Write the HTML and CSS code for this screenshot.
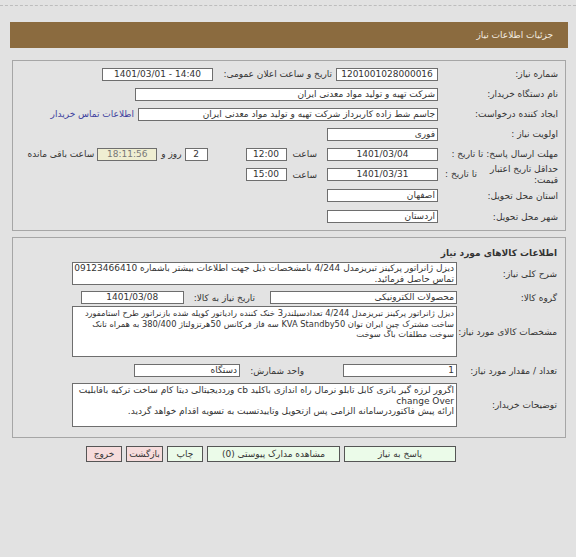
FILE: index.html
```html
<!DOCTYPE html>
<html lang="fa" dir="rtl">
<head>
<meta charset="utf-8">
<title>جزئیات اطلاعات نیاز</title>
<link rel="stylesheet" href="styles.css">
</head>
<body>
<div class="topline"></div>
<div class="header"><span>جزئیات اطلاعات نیاز</span></div>

<div class="panel p1">
  <div class="row">
    <div class="lbl">شماره نیاز:</div>
    <div class="vals">
      <span class="box c w102">1201001028000016</span>
      <span class="txt t-pub">تاریخ و ساعت اعلان عمومی:</span>
      <span class="box c w111 ltrbox">1401/03/01 - 14:40</span>
    </div>
  </div>
  <div class="row">
    <div class="lbl">نام دستگاه خریدار:</div>
    <div class="vals"><span class="box w303">شرکت تهیه و تولید مواد معدنی ایران</span></div>
  </div>
  <div class="row">
    <div class="lbl">ایجاد کننده درخواست:</div>
    <div class="vals">
      <span class="box w300">جاسم شط زاده کاربرداز شرکت تهیه و تولید مواد معدنی ایران</span>
      <span class="link">اطلاعات تماس خریدار</span>
    </div>
  </div>
  <div class="row">
    <div class="lbl">اولویت نیاز :</div>
    <div class="vals"><span class="box w111">فوری</span></div>
  </div>
  <div class="row">
    <div class="lbl">مهلت ارسال پاسخ: تا تاریخ :</div>
    <div class="vals">
      <span class="box c w111">1401/03/04</span>
      <span class="txt t-saat">ساعت</span>
      <span class="box c w41">12:00</span>
      <span class="box c w23 ml-day">2</span>
      <span class="txt t-rooz">روز و</span>
      <span class="box c w60 remain">18:11:56</span>
      <span class="txt t-remain">ساعت باقی مانده</span>
    </div>
  </div>
  <div class="row r2">
    <div class="lbl two">
      <span class="two-main">حداقل تاریخ اعتبار<br>قیمت:</span>
      <span class="two-side">تا تاریخ :</span>
    </div>
    <div class="vals">
      <span class="box c w111">1401/03/31</span>
      <span class="txt t-saat">ساعت</span>
      <span class="box c w41">15:00</span>
    </div>
  </div>
  <div class="row r2">
    <div class="lbl">استان محل تحویل:</div>
    <div class="vals"><span class="box w111">اصفهان</span></div>
  </div>
  <div class="row r2">
    <div class="lbl">شهر محل تحویل:</div>
    <div class="vals"><span class="box w111">اردستان</span></div>
  </div>
</div>

<div class="panel p2">
  <div class="ptitle">اطلاعات کالاهای مورد نیاز</div>
  <div class="row2 g-desc">
    <div class="lbl2">شرح کلی نیاز:</div>
    <div class="area a-desc">دیزل ژانراتور پرکینز تبریزمدل 4/244 بامشخصات ذیل جهت اطلاعات بیشتر باشماره 09123466410<br>تماس حاصل فرمائید.</div>
  </div>
  <div class="row2 g-group">
    <div class="lbl2">گروه کالا:</div>
    <span class="box w187">محصولات الکترونیکی</span>
    <span class="txt t-need">تاریخ نیاز به کالا:</span>
    <span class="box c w103">1401/03/08</span>
  </div>
  <div class="row2 g-spec">
    <div class="lbl2">مشخصات کالای مورد نیاز:</div>
    <div class="area a-spec">دیزل ژانراتور پرکینز تبریزمدل 4/244 تعدادسیلندر3 خنک کننده رادیاتور کوپله شده بازنراتور طرح استامفورد<br>ساخت مشترک چین ایران توان KVA Standby50 سه فاز فرکانس 50هرتزولتاژ 380/400 به همراه تانک<br>سوخت مطلقات باگ سوخت</div>
  </div>
  <div class="row2 g-qty">
    <div class="lbl2">تعداد / مقدار مورد نیاز:</div>
    <span class="box w114">1</span>
    <span class="txt t-unit">واحد شمارش:</span>
    <span class="box w106">دستگاه</span>
  </div>
  <div class="row2 g-note">
    <div class="lbl2">توضیحات خریدار:</div>
    <div class="area a-note">اگرور لرزه گیر باتری کابل تابلو نرمال راه اندازی باکلید cb ورددیجیتالی دیتا کام ساخت ترکیه باقابلیت<br><span class="ltr">change Over</span><br>ارائه پیش فاکتوردرسامانه الزامی پس ازتحویل وتاییدتسبت به تسویه اقدام خواهد گردید.</div>
  </div>
</div>

<div class="buttons">
  <span class="btn green b-reply">پاسخ به نیاز</span>
  <span class="btn green b-docs">مشاهده مدارک پیوستی (0)</span>
  <span class="btn green b-print">چاپ</span>
  <span class="btn pink b-back">بازگشت</span>
  <span class="btn pink b-exit">خروج</span>
</div>
</body>
</html>
```

FILE: styles.css
```css
html, body {
  margin: 0;
  padding: 0;
}
body {
  width: 576px;
  height: 557px;
  background: #e2e2e2;
  font-family: "DejaVu Sans", sans-serif;
  font-size: 9px;
  color: #333;
  overflow: hidden;
}
.topline {
  margin-top: 5px;
  border-top: 1px dashed #bdbdbd;
}
.header {
  margin: 16px 8px 0 10px;
  height: 26px;
  background: #8b6b3f;
  color: #f3ece0;
  display: flex;
  align-items: center;
  padding-right: 15px;
  font-size: 9px;
}
.panel {
  border: 1px solid #a6a6a6;
  background: #e3e3e3;
}
.p1 {
  margin: 12px 10px 0 12px;
  padding: 3px 7px 3px 0;
  height: 163px;
}
.row {
  display: flex;
  align-items: center;
  height: 20px;
}
.row.r2 { height: 21px; }
.lbl {
  width: 113px;
  flex: none;
  margin-left: 7px;
  white-space: nowrap;
}
.lbl.two {
  display: flex;
  align-items: center;
  justify-content: space-between;
  line-height: 11px;
}
.vals {
  display: flex;
  align-items: center;
}
.box {
  display: inline-block;
  box-sizing: border-box;
  height: 13px;
  line-height: 11px;
  background: #fff;
  border: 1px solid #6e6e6e;
  padding: 0 2px;
  white-space: nowrap;
  overflow: hidden;
  flex: none;
}
.box.c { text-align: center; }
.ltrbox { direction: ltr; }
.w102 { width: 102px; }
.w111 { width: 111px; }
.w303 { width: 303px; }
.w300 { width: 300px; }
.w41 { width: 41px; }
.w23 { width: 23px; }
.w60 { width: 60px; }
.w187 { width: 187px; }
.w103 { width: 103px; }
.w114 { width: 114px; }
.w106 { width: 106px; }
.txt { white-space: nowrap; flex: none; }
.t-pub { width: 119px; margin: 0 4px 0 0; text-align: right; }
.t-saat { margin: 0 10px 0 6px; }
.ml-day { margin-right: 38px; }
.t-rooz { margin: 0 3px 0 4px; }
.remain { background: #efeed2; color: #777; }
.t-remain { margin-right: 3px; }
.link {
  color: #3d3f9e;
  margin-right: 4px;
  white-space: nowrap;
}
.p2 {
  margin: 6px 10px 0 12px;
  padding: 0 8px 10px 0;
}
.ptitle {
  font-weight: bold;
  padding-top: 9px;
  line-height: 12px;
  height: 12px;
}
.row2 {
  display: flex;
  align-items: center;
}
.g-desc { margin-top: 3px; }
.g-group { margin-top: 6px; }
.g-spec { margin-top: 2px; }
.g-qty { margin-top: 7px; }
.g-note { margin-top: 6px; }
.lbl2 {
  width: 100px;
  flex: none;
  white-space: nowrap;
}
.area {
  box-sizing: border-box;
  width: 385px;
  background: #fff;
  border: 1px solid #6e6e6e;
  padding: 0 2px;
  line-height: 10.5px;
  white-space: nowrap;
  overflow: hidden;
}
.a-desc { height: 23px; }
.a-spec { height: 51px; padding-top: 1px; font-size: 8.3px; }
.a-note { height: 44px; padding-top: 1px; }
.ltr { direction: ltr; unicode-bidi: embed; }
.t-need { margin: 0 15px 0 10px; }
.t-unit { margin: 0 39px 0 10px; }
.buttons {
  display: flex;
  gap: 4px;
  margin: 8px 120px 0 0;
}
.btn {
  box-sizing: border-box;
  height: 16px;
  line-height: 14px;
  border: 1px solid #555;
  text-align: center;
  white-space: nowrap;
  color: #333;
}
.green { background: #ebfbe9; }
.pink { background: #f6dcdc; }
.b-reply { width: 112px; }
.b-docs { width: 133px; }
.b-print { width: 36px; }
.b-back { width: 37px; }
.b-exit { width: 36px; }
```
